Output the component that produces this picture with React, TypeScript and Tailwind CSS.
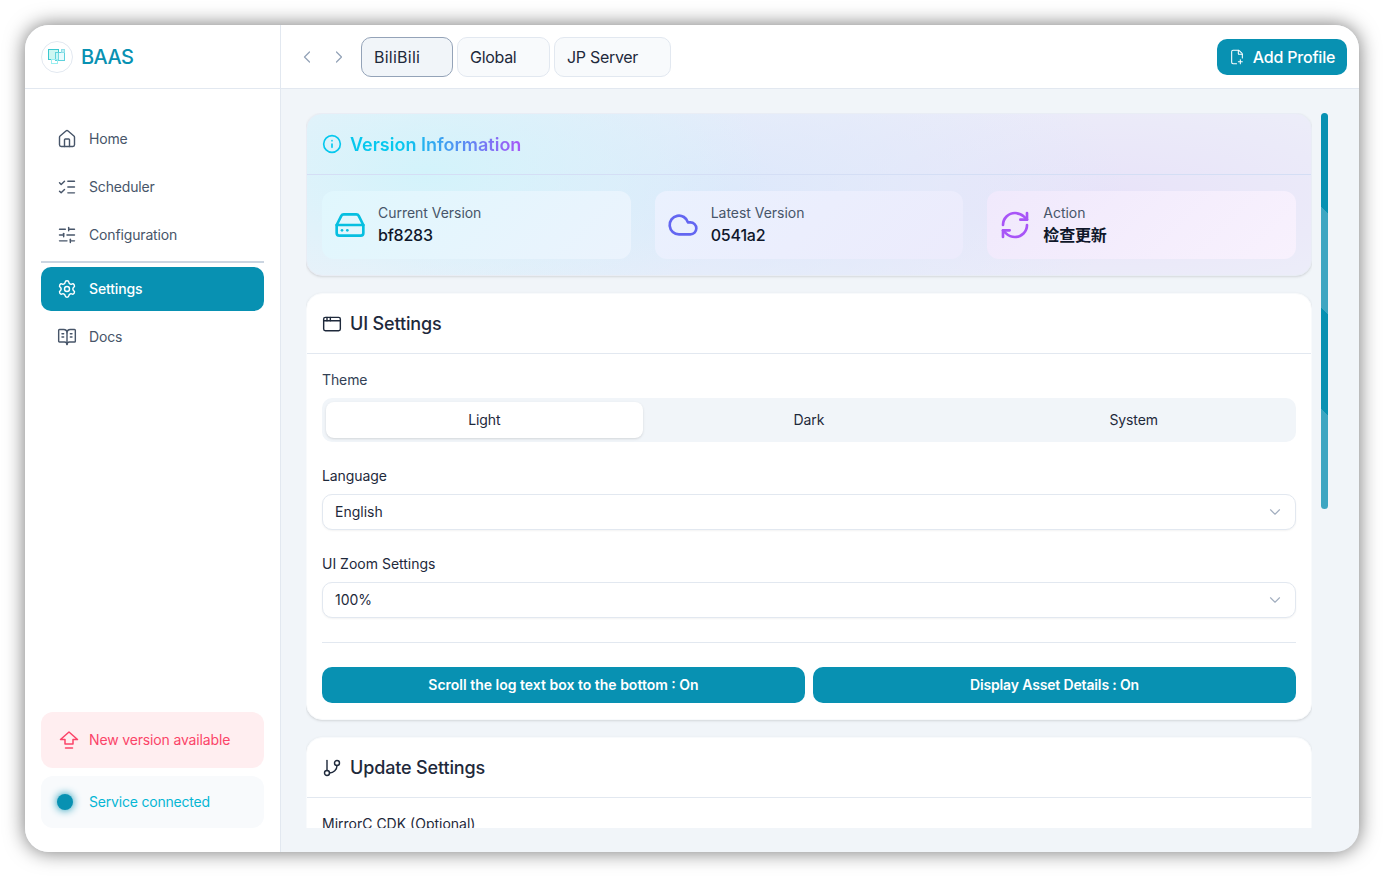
import { BookOpenText, ChevronDown, ChevronLeft, ChevronRight, Cloud, FilePlus2, GitBranch, HardDrive, House, Info, ListChecks, RefreshCw, Settings, SlidersHorizontal, AppWindow } from 'lucide-react';

const navItems = [
  { label: 'Home', icon: House },
  { label: 'Scheduler', icon: ListChecks },
  { label: 'Configuration', icon: SlidersHorizontal },
];

const SelectBox = ({ value }: { value: string }) => (
  <div className="flex items-center justify-between h-9 pl-3 pr-[11px] pb-px border border-[#e2e8f0] rounded-[10px] bg-white text-[14px] text-[#1e293b] shadow-[0_1px_2px_rgba(0,0,0,0.05)]">
    {value}
    <ChevronDown className="w-[18px] h-[18px] text-[#a3afc0]" strokeWidth={1.5} />
  </div>
);

const VersionCard = ({ label, value, strong, children, bg }: { label: string; value: string; strong?: boolean; children: React.ReactNode; bg: string }) => (
  <div className={`flex-1 h-[68px] rounded-xl flex items-center gap-3 px-3 ${bg}`}>
    {children}
    <div>
      <div className="text-[14px] leading-5 text-[#475569] tracking-[-0.03px]">{label}</div>
      <div className={`text-[16px] leading-6 text-[#0f172a] tracking-[-0.2px] ${strong ? 'font-bold' : 'font-medium'}`}>{value}</div>
    </div>
  </div>
);

export default function App() {
  return (
    <div className="w-[1384px] h-[877px] bg-white p-[25px] font-['Inter','Noto_Sans_CJK_SC',sans-serif] overflow-hidden">
      <div className="w-[1334px] h-[827px] flex rounded-[24px] overflow-hidden bg-[#f1f5f9] shadow-[0_0_20px_rgba(0,0,0,0.55)]">
        <aside className="w-[256px] shrink-0 bg-white border-r border-[#e2e8f0] flex flex-col">
          <div className="h-[64px] shrink-0 border-b border-[#e2e8f0] flex items-center gap-2 px-4">
            <div className="w-8 h-8 rounded-full border border-[#e2e8f0] flex items-center justify-center">
              <svg width="20" height="20" viewBox="0 0 20 20" fill="none">
                <rect x="1.5" y="2.5" width="10" height="10" fill="#99f0e6" fillOpacity="0.5" stroke="#3cc8cf" />
                <rect x="8.5" y="5.5" width="9" height="8" fill="#c5f5f9" fillOpacity="0.4" stroke="#5fd2dc" />
                <rect x="14.5" y="2.5" width="3" height="3" fill="#bfeef3" stroke="#8fe0e8" />
                <rect x="4.5" y="12.5" width="6" height="4" fill="none" stroke="#9ceef0" />
              </svg>
            </div>
            <span className="text-[20px] font-medium text-[#0891b2] tracking-[-0.6px]">BAAS</span>
          </div>
          <nav className="px-4 pt-[28px] flex-1 flex flex-col">
            {navItems.map(({ label, icon: Icon }) => (
              <div key={label} className="h-[44px] mb-1 flex items-center gap-3 px-4 text-[14px] text-[#475569] tracking-[-0.15px]">
                <Icon className="w-[20px] h-[20px]" strokeWidth={1.7} />
                <span className="pb-[2px]">{label}</span>
              </div>
            ))}
            <div className="h-[2px] bg-[#cbd5e1] mb-1" />
            <div className="h-[44px] mb-1 flex items-center gap-3 px-4 rounded-[10px] bg-[#0891b2] text-[14px] font-medium text-white tracking-[-0.15px]">
              <Settings className="w-[20px] h-[20px]" strokeWidth={1.7} />
              <span className="pb-[2px]">Settings</span>
            </div>
            <div className="h-[44px] flex items-center gap-3 px-4 text-[14px] text-[#475569] tracking-[-0.15px]">
              <BookOpenText className="w-[20px] h-[20px]" strokeWidth={1.7} />
              <span className="pb-[2px]">Docs</span>
            </div>
            <div className="mt-auto mb-2 h-[56px] rounded-xl bg-[#ffeef0] flex items-center gap-[10px] pl-[18px] text-[14px] text-[#fb4468] tracking-[-0.15px]">
              <svg width="20" height="20" viewBox="0 0 20 20" fill="none" stroke="currentColor" strokeWidth="1.5" strokeLinejoin="round" strokeLinecap="round">
                <path d="M10 2 L18.5 9.5 H14 V14 H6 V9.5 H1.5 Z" />
                <path d="M6.5 18 H13.5" />
              </svg>
              <span className="pb-[2px]">New version available</span>
            </div>
            <div className="mb-6 h-[52px] rounded-xl bg-[#f8fafc] flex items-center gap-4 px-4 text-[14px] text-[#06b6d4] tracking-[-0.2px]">
              <span className="w-4 h-4 rounded-full bg-[#0891b2] shadow-[0_0_8px_#0891b2]" />
              <span className="pb-[2px]">Service connected</span>
            </div>
          </nav>
        </aside>

        <main className="flex-1 min-w-0 flex flex-col">
          <header className="h-[64px] shrink-0 bg-white border-b border-[#e2e8f0] flex items-center pl-4 pr-3">
            <ChevronLeft className="w-5 h-5 text-[#94a3b8]" strokeWidth={1.5} />
            <ChevronRight className="w-5 h-5 ml-3 text-[#94a3b8]" strokeWidth={1.5} />
            <div className="flex gap-1 ml-3 text-[16px] text-[#1e293b] tracking-[-0.3px]">
              <div className="w-[92px] h-10 rounded-[10px] border border-[#94a3b8] bg-[#f1f5f9] flex items-center px-3 tracking-[0.25px]">BiliBili</div>
              <div className="w-[93px] h-10 rounded-[10px] border border-[#e2e8f0] bg-[#f8fafc] flex items-center px-3">Global</div>
              <div className="w-[117px] h-10 rounded-[10px] border border-[#e2e8f0] bg-[#f8fafc] flex items-center px-3">JP Server</div>
            </div>
            <button className="ml-auto w-[130px] h-9 rounded-[10px] bg-[#0891b2] text-white text-[16px] font-medium tracking-[-0.2px] flex items-center justify-center gap-2">
              <FilePlus2 className="w-4 h-4" strokeWidth={1.6} />
              Add Profile
            </button>
          </header>

          <div className="flex-1 min-h-0 pl-[25px] pr-[31px] pt-6 pb-6 flex gap-[9px]">
            <div className="flex-1 min-w-0 h-full overflow-hidden flex flex-col gap-4">
              <section className="shrink-0 h-[163px] mb-px rounded-2xl border border-[#e9edf5] shadow-sm overflow-hidden bg-[#eef1f9] bg-[radial-gradient(ellipse_34%_100%_at_12%_35%,#d3f3fb,transparent),radial-gradient(ellipse_40%_110%_at_42%_50%,#dde8fb,transparent),radial-gradient(ellipse_45%_90%_at_80%_50%,#e8e3f9,transparent)]">
                <div className="h-[61px] border-b border-[#d4def5] flex items-center gap-2 px-[15px]">
                  <Info className="w-[20px] h-[20px] text-[#06c8ee]" strokeWidth={2} />
                  <span className="text-[18px] font-semibold text-transparent bg-clip-text bg-[linear-gradient(90deg,#06c8ee_0%,#06c8ee_30%,#a855f7_100%)]">Version Information</span>
                </div>
                <div className="flex gap-6 px-[15px] pt-[16px]">
                  <VersionCard label="Current Version" value="bf8283" bg="bg-[linear-gradient(135deg,#e0f7fd,#ebf3fd)]">
                    <HardDrive className="w-8 h-8 text-[#06bfe0]" strokeWidth={2} />
                  </VersionCard>
                  <VersionCard label="Latest Version" value="0541a2" bg="bg-[linear-gradient(135deg,#eaf1fe,#ecebfc)]">
                    <Cloud className="w-8 h-8 text-[#6366f1]" strokeWidth={2} />
                  </VersionCard>
                  <VersionCard label="Action" value="检查更新" strong bg="bg-[linear-gradient(135deg,#f0e9fc,#f8f1fd)]">
                    <RefreshCw className="w-8 h-8 text-[#a855f7]" strokeWidth={2} />
                  </VersionCard>
                </div>
              </section>

              <section className="shrink-0 h-[427px] mb-px rounded-2xl border border-[#f8fafc] bg-white shadow-sm">
                <div className="h-[60px] border-b border-[#e2e8f0] flex items-center gap-2 px-[15px]">
                  <AppWindow className="w-5 h-5 text-[#1e293b]" strokeWidth={1.7} />
                  <h2 className="text-[18px] font-medium text-[#1e293b] tracking-[-0.15px]">UI Settings</h2>
                </div>
                <div className="px-[15px] pt-4">
                  <div className="text-[14px] leading-5 text-[#334155] mb-2 tracking-[-0.1px]">Theme</div>
                  <div className="h-11 rounded-[10px] bg-[#f1f5f9] p-1 grid grid-cols-3 gap-2 text-[14px] text-[#1e293b] tracking-[-0.1px]">
                    <div className="rounded-lg bg-white shadow flex items-center justify-center pb-px">Light</div>
                    <div className="flex items-center justify-center pb-px">Dark</div>
                    <div className="flex items-center justify-center pb-px">System</div>
                  </div>
                  <div className="text-[14px] leading-5 text-[#1e293b] mt-6 mb-2 tracking-[-0.1px]">Language</div>
                  <SelectBox value="English" />
                  <div className="text-[14px] leading-5 text-[#1e293b] mt-6 mb-2">UI Zoom Settings</div>
                  <SelectBox value="100%" />
                  <div className="h-px bg-[#e2e8f0] mt-6 mb-6" />
                  <div className="grid grid-cols-2 gap-2">
                    <button className="h-9 pb-px rounded-[10px] bg-[#0891b2] text-white text-[14px] font-semibold">Scroll the log text box to the bottom : On</button>
                    <button className="h-9 pb-px rounded-[10px] bg-[#0891b2] text-white text-[14px] font-semibold tracking-[-0.15px]">Display Asset Details : On</button>
                  </div>
                </div>
              </section>

              <section className="shrink-0 h-[300px] rounded-2xl border border-[#f8fafc] bg-white shadow-sm">
                <div className="h-[60px] border-b border-[#e2e8f0] flex items-center gap-2 px-[15px]">
                  <GitBranch className="w-5 h-5 text-[#1e293b]" strokeWidth={1.7} />
                  <h2 className="text-[18px] font-medium text-[#1e293b] tracking-[-0.15px]">Update Settings</h2>
                </div>
                <div className="px-[15px] pt-4 text-[14px] leading-5 text-[#1e293b]">MirrorC CDK (Optional)</div>
              </section>
            </div>
            <div className="w-[7px] h-[396px] rounded-full shrink-0 bg-[linear-gradient(225deg,#0891b2_25%,#3ea6c2_25%,#3ea6c2_50%,#0891b2_50%,#0891b2_75%,#3ea6c2_75%)]" />
          </div>
        </main>
      </div>
    </div>
  );
}
